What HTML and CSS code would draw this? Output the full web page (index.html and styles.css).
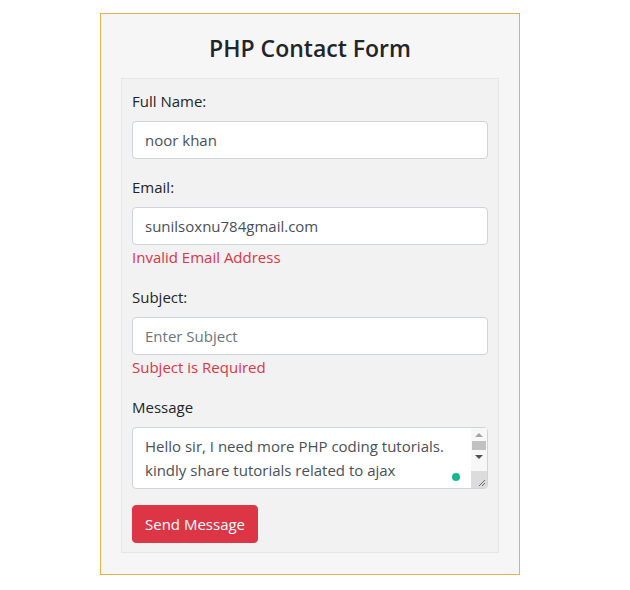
FILE: index.html
```html
<!DOCTYPE html>
<html lang="en">
<head>
<meta charset="utf-8">
<title>PHP Contact Form</title>
<link rel="stylesheet" href="styles.css">
</head>
<body>
<div class="card">
  <h3 class="title">PHP Contact Form</h3>
  <form class="well">
    <div class="group">
      <label class="label">Full Name:</label>
      <input class="field" type="text" value="noor khan">
    </div>
    <div class="group">
      <label class="label">Email:</label>
      <input class="field" type="text" value="sunilsoxnu784gmail.com">
      <div class="error">Invalid Email Address</div>
    </div>
    <div class="group">
      <label class="label">Subject:</label>
      <input class="field" type="text" placeholder="Enter Subject">
      <div class="error">Subject is Required</div>
    </div>
    <div class="group">
      <label class="label">Message</label>
      <div class="area-wrap">
        <textarea class="field area" rows="2">Hello sir, I need more PHP coding tutorials. kindly share tutorials related to ajax
</textarea>
        <span class="dot"></span>
        <div class="scrollbar">
          <span class="arrow up"></span>
          <span class="thumb"></span>
          <span class="arrow down"></span>
          <span class="grip">
            <svg width="16" height="17" viewBox="0 0 16 17"><path d="M14 9 L8 15 M14 12 L11 15" stroke="#6b6b6b" stroke-width="1" fill="none"/></svg>
          </span>
        </div>
      </div>
    </div>
    <button type="button" class="btn">Send Message</button>
  </form>
</div>
</body>
</html>
```
FILE: styles.css
```css
* { box-sizing: border-box; }
body {
  margin: 0;
  background: #ffffff;
  font-family: "Open Sans", "Noto Sans", sans-serif;
  color: #212529;
}
.card {
  width: 420px;
  margin: 13px 0 0 100px;
  border: 1px solid #e3b24c;
  background: #f6f6f6;
  padding: 20px 20px 21px;
}
.title {
  margin: 0 0 15px;
  text-align: center;
  font-size: 23px;
  font-weight: 600;
  line-height: 29px;
  color: #212529;
}
.well {
  margin: 0;
  background: #f2f2f2;
  border: 1px solid #e6e6e6;
  padding: 10px 10px 9px;
}
.group { margin-bottom: 16px; }
.label {
  display: block;
  font-size: 15px;
  line-height: 24px;
  margin-bottom: 8px;
}
.field {
  display: block;
  width: 100%;
  height: 38px;
  padding: 6px 12px;
  font-family: inherit;
  font-size: 15px;
  line-height: 24px;
  color: #495057;
  background: #fff;
  border: 1px solid #ced4da;
  border-radius: 4px;
  outline: none;
}
.field::placeholder { color: #6c757d; opacity: 1; }
.error {
  color: #dc3545;
  font-size: 15px;
  line-height: 24px;
}
.area-wrap { position: relative; }
.area {
  height: 62px;
  resize: none;
  overflow: hidden;
  padding-right: 24px;
}
.dot {
  position: absolute;
  left: 320px;
  top: 46px;
  width: 8px;
  height: 8px;
  border-radius: 50%;
  background: #15b88f;
}
.scrollbar {
  position: absolute;
  top: 1px;
  right: 1px;
  bottom: 1px;
  width: 16px;
  background: #f7f7f7;
  display: flex;
  flex-direction: column;
  align-items: center;
}
.arrow {
  width: 0;
  height: 0;
  border-left: 4px solid transparent;
  border-right: 4px solid transparent;
}
.arrow.up { border-bottom: 4px solid #a3a3a3; margin-top: 5px; }
.arrow.down { border-top: 4px solid #505050; margin-top: 5px; }
.thumb {
  width: 14px;
  height: 9px;
  background: #c1c1c1;
  margin-top: 4px;
}
.grip {
  margin-top: auto;
  width: 16px;
  height: 17px;
  background: #dcdcdc;
  display: block;
}
.grip svg { display: block; }
.btn {
  display: block;
  height: 38px;
  padding: 6px 12px;
  font-family: inherit;
  font-size: 15px;
  line-height: 24px;
  color: #fff;
  background: #dc3545;
  border: 1px solid #dc3545;
  border-radius: 4px;
}
```
